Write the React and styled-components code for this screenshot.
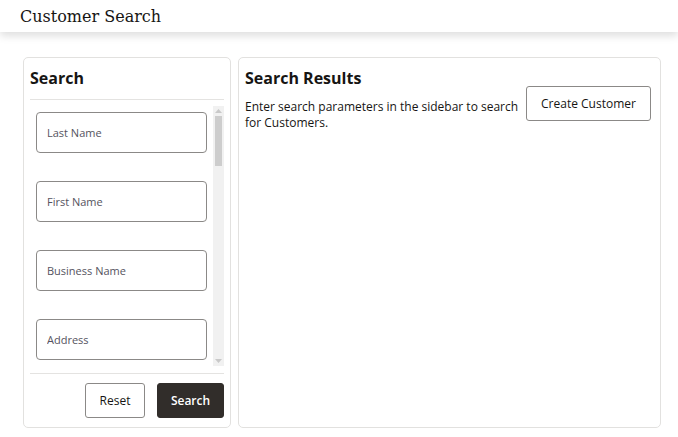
import styled, { createGlobalStyle } from 'styled-components';

const GlobalStyle = createGlobalStyle`
    html, body {
        margin: 0;
        padding: 0;
        background: #fff;
    }
    body {
        font-family: "Open Sans", "Noto Sans", sans-serif;
        color: #161513;
    }
    * {
        box-sizing: border-box;
    }
`;

const Header = styled.header`
    height: 32px;
    padding-left: 20px;
    display: flex;
    align-items: center;
    background: #fff;
    box-shadow: 0 4px 8px rgba(0, 0, 0, 0.13);
    font-family: "DejaVu Serif", Georgia, serif;
    font-size: 16px;
    color: #161513;
    position: relative;
`;

const Main = styled.main`
    display: flex;
    gap: 7px;
    padding: 25px 17px 0 23px;
`;

const Panel = styled.section`
    width: ${props => props.width}px;
    height: 371px;
    border: 1px solid #e2e1df;
    border-radius: 5px;
    padding: 0 6px;
    display: flex;
    flex-direction: column;
    background: #fff;
`;

const Title = styled.h2`
    margin: 0;
    padding: 10px 0 11px;
    font-size: 16px;
    line-height: 20px;
    font-weight: 700;
    color: #161513;
`;

const Divider = styled.hr`
    margin: 0;
    border: none;
    border-top: 1px solid #e4e3e1;
`;

const ScrollArea = styled.div`
    margin-top: 6px;
    height: 260px;
    display: flex;
`;

const FieldList = styled.div`
    flex: 1;
    overflow: hidden;
    padding: 6px 6px 0 6px;
    display: flex;
    flex-direction: column;
    gap: 28px;
`;

const ScrollTrack = styled.div`
    width: 11px;
    background: #f1f1f1;
    display: flex;
    flex-direction: column;
    align-items: center;
`;

const Arrow = styled.div`
    height: 10px;
    width: 100%;
    display: flex;
    align-items: center;
    justify-content: center;
`;

const Thumb = styled.div`
    width: 7px;
    height: 50px;
    background: #cdcdcd;
`;

const TrackSpace = styled.div`
    flex: 1;
`;

const Field = styled.input`
    flex: none;
    width: 171px;
    height: 41px;
    border: 1px solid #8b8987;
    border-radius: 4px;
    padding: 0 10px;
    font-family: "Open Sans", "Noto Sans", sans-serif;
    font-size: 11px;
    color: #161513;
    background: #fff;
    outline: none;

    &::placeholder {
        color: #55535e;
    }
`;

const Footer = styled.div`
    margin-top: 7px;
    border-top: 1px solid #e4e3e1;
    padding-top: 9px;
    display: flex;
    justify-content: flex-end;
    gap: 12px;
`;

const Button = styled.button`
    height: 35px;
    width: ${props => props.w}px;
    padding: 0;
    border-radius: 3px;
    border: 1px solid ${props => (props.primary ? '#312d2a' : '#8b8987')};
    background: ${props => (props.primary ? '#312d2a' : '#fff')};
    color: ${props => (props.primary ? '#fff' : '#161513')};
    font-family: "Open Sans", "Noto Sans", sans-serif;
    font-size: 12px;
    font-weight: ${props => (props.primary ? 600 : 500)};
    cursor: pointer;
`;

const ResultsHead = styled.div`
    display: flex;
    justify-content: space-between;
    align-items: flex-start;
    padding-right: 3px;
`;

const Intro = styled.div`
    width: 280px;
`;

const Text = styled.p`
    margin: 0;
    font-size: 12px;
    line-height: 16px;
    color: #161513;
`;

const CreateButton = styled(Button)`
    margin-top: 28px;
`;

const fields = [
    'Last Name',
    'First Name',
    'Business Name',
    'Address',
    'City',
    'State',
    'Postal Code',
    'Phone Number',
];

function Triangle({ down }) {
    return (
        <svg width="7" height="4" viewBox="0 0 7 4">
            <polygon points={down ? '0,0 7,0 3.5,4' : '0,4 7,4 3.5,0'} fill="#c9c9c9" />
        </svg>
    );
}

export default function App() {
    return (
        <>
            <GlobalStyle />
            <Header>Customer Search</Header>
            <Main>
                <Panel width={208}>
                    <Title>Search</Title>
                    <Divider />
                    <ScrollArea>
                        <FieldList>
                            {fields.map(name => (
                                <Field key={name} type="text" placeholder={name} />
                            ))}
                        </FieldList>
                        <ScrollTrack>
                            <Arrow><Triangle /></Arrow>
                            <Thumb />
                            <TrackSpace />
                            <Arrow><Triangle down /></Arrow>
                        </ScrollTrack>
                    </ScrollArea>
                    <Footer>
                        <Button w={60}>Reset</Button>
                        <Button primary w={67}>Search</Button>
                    </Footer>
                </Panel>
                <Panel width={423}>
                    <ResultsHead>
                        <Intro>
                            <Title>Search Results</Title>
                            <Text>
                                Enter search parameters in the sidebar to search for Customers.
                            </Text>
                        </Intro>
                        <CreateButton w={125}>Create Customer</CreateButton>
                    </ResultsHead>
                </Panel>
            </Main>
        </>
    );
}
